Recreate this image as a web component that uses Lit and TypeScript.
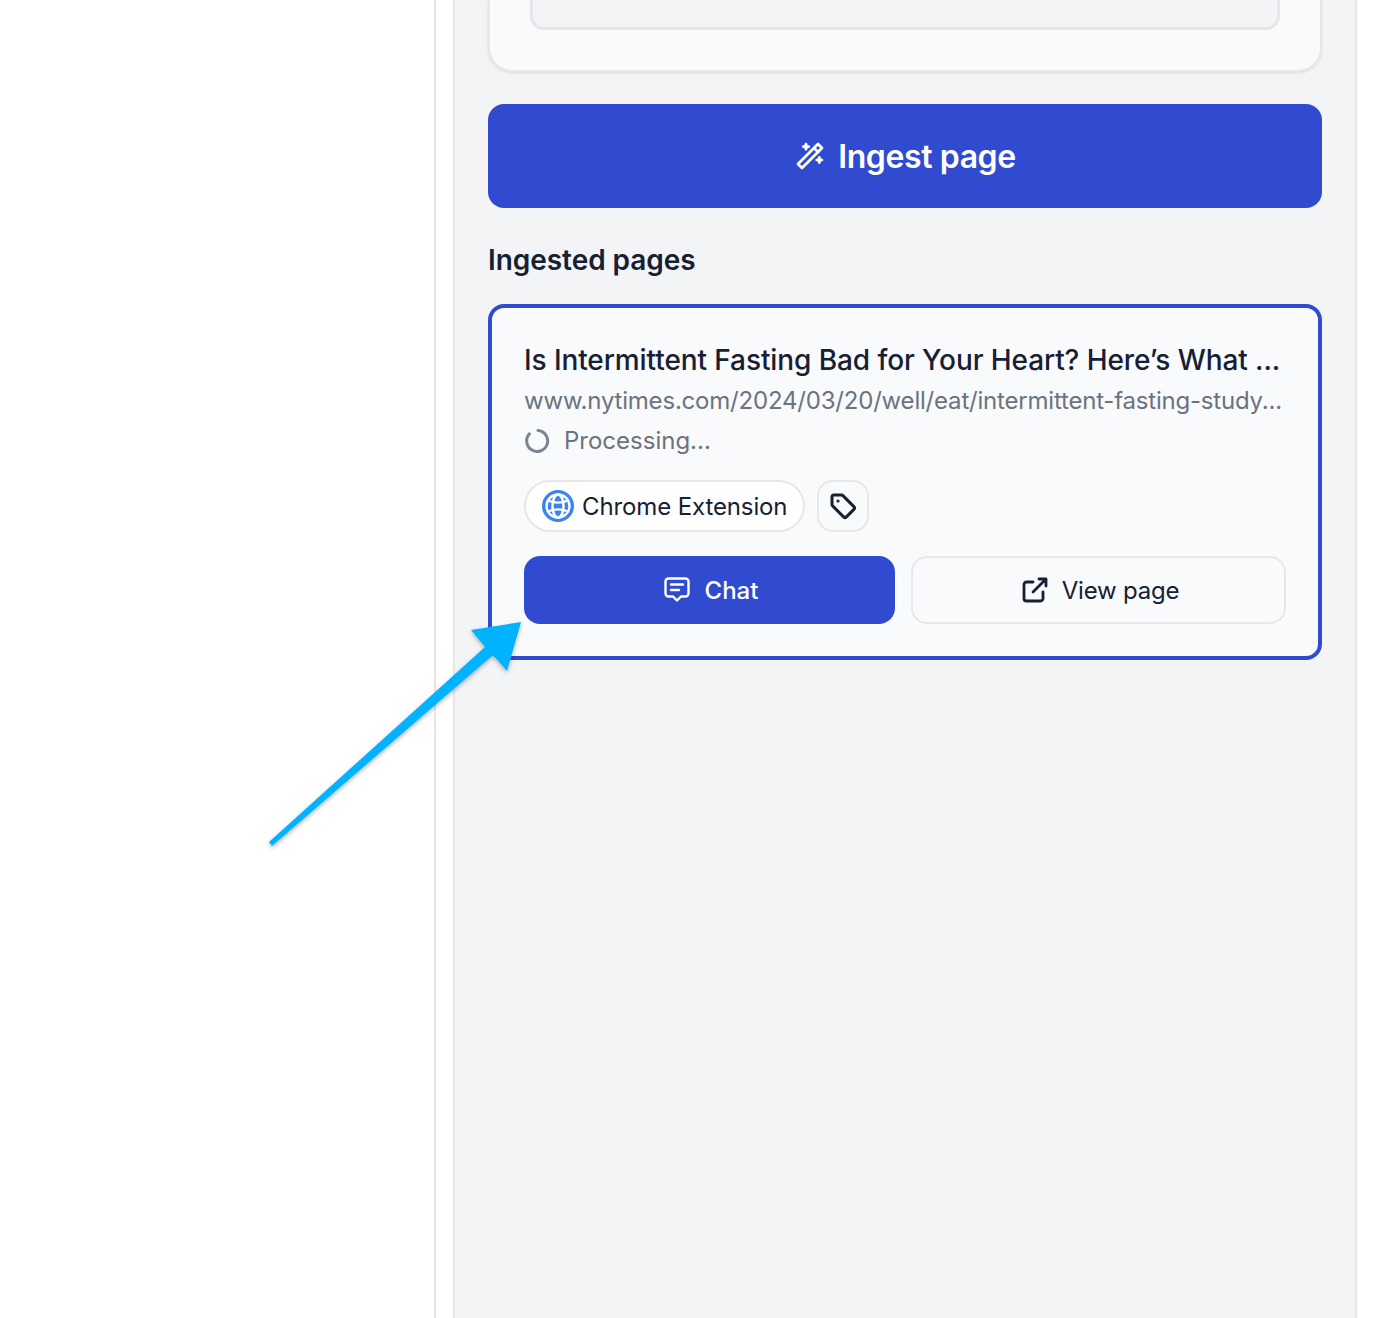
import { LitElement, html, css } from 'lit';
import { customElement } from 'lit/decorators.js';

@customElement('app-root')
export class AppRoot extends LitElement {
  static styles = css`
    :host {
      display: block;
      position: relative;
      height: 1318px;
      overflow: hidden;
      background: #fff;
      font-family: Inter, 'Liberation Sans', sans-serif;
      color: #172033;
    }
    svg {
      flex: none;
    }
    .page {
      display: flex;
      height: 100%;
    }
    .left {
      box-sizing: border-box;
      width: 436px;
      flex: none;
      border-right: 2px solid #e5e5e5;
    }
    .side {
      box-sizing: border-box;
      width: 904px;
      margin-left: 17px;
      flex: none;
      padding: 0 33px;
      background: #f3f4f6;
      border-left: 2px solid #e5e7eb;
      border-right: 2px solid #e5e7eb;
    }
    .top-card {
      box-sizing: border-box;
      width: 834px;
      height: 72px;
      padding: 0 40px;
      background: #f9fafb;
      border: 2px solid #e5e7eb;
      border-top: none;
      border-radius: 0 0 24px 24px;
      box-shadow: 0 1px 3px rgba(0, 0, 0, 0.1);
    }
    .top-input {
      box-sizing: border-box;
      height: 30px;
      background: #f3f4f6;
      border: 3px solid #e5e7eb;
      border-top: none;
      border-radius: 0 0 14px 14px;
    }
    .ingest {
      display: flex;
      align-items: center;
      justify-content: center;
      gap: 12px;
      width: 834px;
      height: 104px;
      margin-top: 32px;
      background: #304bcf;
      border-radius: 16px;
      color: #fff;
      font-size: 32px;
      font-weight: 600;
      letter-spacing: -0.4px;
    }
    h2 {
      margin: 36px 0 28px;
      font-size: 28px;
      line-height: 32px;
      font-weight: 600;
      letter-spacing: -0.05px;
    }
    .page-card {
      box-sizing: border-box;
      width: 834px;
      height: 356px;
      padding: 32px;
      background: #f9fafb;
      border: 4px solid #304bcf;
      border-radius: 16px;
    }
    .title {
      font-size: 28px;
      line-height: 40px;
      font-weight: 500;
      white-space: nowrap;
      letter-spacing: -0.09px;
    }
    .url,
    .status {
      padding-top: 2px;
      font-size: 24px;
      line-height: 38px;
      color: #6b7280;
      white-space: nowrap;
    }
    .url {
      letter-spacing: -0.2px;
    }
    .status {
      display: flex;
      align-items: center;
      gap: 14px;
    }
    .tags {
      display: flex;
      gap: 12px;
      margin-top: 20px;
    }
    .chip {
      box-sizing: border-box;
      display: flex;
      align-items: center;
      gap: 8px;
      width: 281px;
      height: 52px;
      padding: 0 16px;
      background: #fff;
      border: 2px solid #e5e7eb;
      border-radius: 26px;
      font-size: 24px;
      letter-spacing: -0.12px;
      white-space: nowrap;
    }
    .tag {
      box-sizing: border-box;
      display: flex;
      align-items: center;
      justify-content: center;
      width: 52px;
      height: 52px;
      border: 2px solid #e5e7eb;
      border-radius: 16px;
    }
    .actions {
      display: grid;
      grid-template-columns: 371px 375px;
      gap: 16px;
      margin-top: 24px;
    }
    .btn {
      box-sizing: border-box;
      display: flex;
      align-items: center;
      justify-content: center;
      gap: 14px;
      height: 68px;
      border-radius: 16px;
      font-size: 24px;
      font-weight: 500;
    }
    .primary {
      padding-left: 2px;
      background: #304bcf;
      color: #fff;
    }
    .secondary {
      padding-left: 4px;
      border: 2px solid #e5e7eb;
      font-weight: 400;
      letter-spacing: -0.2px;
    }
    .arrow {
      position: absolute;
      left: 0;
      top: 0;
      pointer-events: none;
    }
  `;

  render() {
    return html`
      <div class="page">
        <div class="left"></div>
        <div class="side">
          <div class="top-card"><div class="top-input"></div></div>
          <div class="ingest">
            <svg width="32" height="32" viewBox="0 0 24 24" fill="none" stroke="currentColor" stroke-width="2" stroke-linecap="round" stroke-linejoin="round">
              <path d="M6 21l15-15-3-3-15 15 3 3" />
              <path d="M15 6l3 3" />
              <path d="M9 3a2 2 0 0 0 2 2 2 2 0 0 0-2 2 2 2 0 0 0-2-2 2 2 0 0 0 2-2" />
              <path d="M19 13a2 2 0 0 0 2 2 2 2 0 0 0-2 2 2 2 0 0 0-2-2 2 2 0 0 0 2-2" />
            </svg>
            Ingest page
          </div>
          <h2>Ingested pages</h2>
          <div class="page-card">
            <div class="title">Is Intermittent Fasting Bad for Your Heart? Here’s What ...</div>
            <div class="url">www.nytimes.com/2024/03/20/well/eat/intermittent-fasting-study...</div>
            <div class="status">
              <svg width="26" height="26" viewBox="0 0 26 26" fill="none" stroke="#7b8494" stroke-width="3" stroke-linecap="round">
                <path d="M14 2.500A10.500 10.500 0 1 1 5.500 5.800" />
              </svg>
              Processing...
            </div>
            <div class="tags">
              <div class="chip">
                <svg width="32" height="32" viewBox="0 0 32 32" fill="none">
                  <circle cx="16" cy="16" r="16" fill="#3b82f6" />
                  <g stroke="#fff" stroke-width="2.400" fill="none">
                    <circle cx="16" cy="16" r="11.500" />
                    <ellipse cx="16" cy="16" rx="5.500" ry="11.500" />
                    <path d="M6 10.500c6 2.500 14 2.500 20 0M6 21.500c6-2.500 14-2.500 20 0" />
                  </g>
                </svg>
                Chrome Extension
              </div>
              <div class="tag">
                <svg width="30" height="30" viewBox="0 0 30 30" fill="none" stroke="#172033" stroke-width="3" stroke-linejoin="round">
                  <path d="M4 5.500A1.500 1.500 0 0 1 5.500 4h8a2 2 0 0 1 1.400.6l11 11a2 2 0 0 1 0 2.800l-7.500 7.500a2 2 0 0 1-2.800 0l-11-11A2 2 0 0 1 4 13.500z" />
                  <circle cx="10" cy="10" r="1.600" fill="#172033" stroke="none" />
                </svg>
              </div>
            </div>
            <div class="actions">
              <div class="btn primary">
                <svg width="28" height="28" viewBox="0 0 28 28" fill="none" stroke="currentColor" stroke-width="2.400" stroke-linecap="round" stroke-linejoin="round">
                  <path d="M5.500 2.500h17a3 3 0 0 1 3 3v12a3 3 0 0 1-3 3H18l-4 4-4-4H5.500a3 3 0 0 1-3-3v-12a3 3 0 0 1 3-3z" />
                  <path d="M8 8.500h12M8 14h8" />
                </svg>
                Chat
              </div>
              <div class="btn secondary">
                <svg width="26" height="26" viewBox="0 0 26 26" fill="none" stroke="currentColor" stroke-width="2.800" stroke-linecap="round" stroke-linejoin="round">
                  <path d="M11 5H4.500A2.500 2.500 0 0 0 2 7.500v14A2.500 2.500 0 0 0 4.500 24h14a2.500 2.500 0 0 0 2.500-2.500V15" />
                  <path d="M11 15L24 2M17 2h7v7" />
                </svg>
                View page
              </div>
            </div>
          </div>
        </div>
      </div>
      <svg class="arrow" width="1374" height="1318" viewBox="0 0 1374 1318">
        <defs>
          <filter id="arrow-shadow" x="-10%" y="-10%" width="120%" height="120%">
            <feDropShadow dx="0" dy="2" stdDeviation="2" flood-color="#000" flood-opacity="0.3" />
          </filter>
        </defs>
        <polygon
          points="521,622 507,671 493,655 272,846 269,842 485,647 471,630"
          fill="#00b2ff"
          filter="url(#arrow-shadow)"
        />
      </svg>
    `;
  }
}
